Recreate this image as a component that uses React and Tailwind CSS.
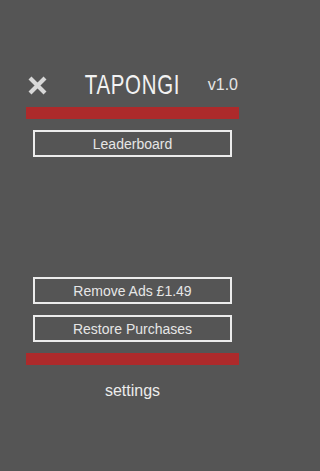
import React from "react";

function CloseIcon() {
  return (
    <svg width="19" height="19" viewBox="0 0 19 19" className="block">
      <path d="M2 2 L17 17 M17 2 L2 17" stroke="#d8d8d8" strokeWidth="4.2" strokeLinecap="butt" />
    </svg>
  );
}

function MenuButton({ label, className = "" }) {
  return (
    <button
      className={`w-full h-[27px] border-2 border-[#ececec] bg-transparent text-[#e6e6e6] text-[14px] leading-none flex items-center justify-center ${className}`}
    >
      {label}
    </button>
  );
}

export default function App() {
  return (
    <div className="w-full min-h-[471px] bg-[#555555]">
      <div
        className="w-[265px] h-[471px] bg-[#555555] overflow-hidden"
        style={{ fontFamily: '"Liberation Sans", Arial, sans-serif' }}
      >
        <div className="pt-[71px] px-[26px]">
          {/* Header */}
          <div className="grid grid-cols-[1fr_auto_1fr] items-center h-[24px]">
            <div className="pl-[2px]">
              <CloseIcon />
            </div>
            <div className="text-[28px] leading-none text-[#f2f2f2] scale-x-[0.73] tracking-[1px] whitespace-nowrap">
              TAPONGI
            </div>
            <div className="text-right text-[16px] leading-none text-[#e6e6e6] pr-[1px]">v1.0</div>
          </div>

          <div className="mt-[12px] h-[12px] bg-[#ad2a2b]" />

          <div className="px-[7px]">
            <MenuButton label="Leaderboard" className="mt-[11px]" />
            <MenuButton label="Remove Ads £1.49" className="mt-[120px]" />
            <MenuButton label="Restore Purchases" className="mt-[11px]" />
          </div>

          <div className="mt-[11px] h-[12px] bg-[#ad2a2b]" />

          <p className="mt-[14px] text-center text-[16px] leading-[24px] text-[#ececec]">settings</p>
        </div>
      </div>
    </div>
  );
}
